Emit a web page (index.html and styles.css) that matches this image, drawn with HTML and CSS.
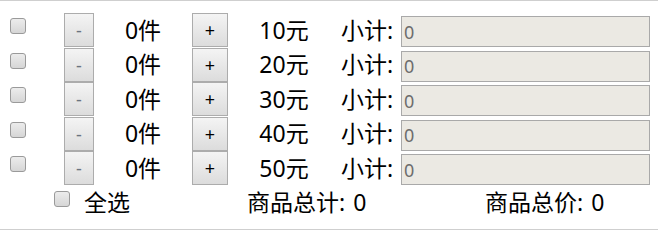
FILE: index.html
```html
<!DOCTYPE html>
<html lang="zh-CN">
<head>
    <meta charset="UTF-8">
    <title>购物车</title>
    <link rel="stylesheet" href="styles.css">
</head>
<body>
    <div class="cart">
        <div class="cart-list">
            <div class="cart-row">
                <input type="checkbox" class="check">
                <button class="btn" disabled>-</button>
                <span class="count">0件</span>
                <button class="btn">+</button>
                <span class="price">10元</span>
                <span class="label">小计:</span>
                <input type="text" class="subtotal" value="0" disabled>
            </div>
            <div class="cart-row">
                <input type="checkbox" class="check">
                <button class="btn" disabled>-</button>
                <span class="count">0件</span>
                <button class="btn">+</button>
                <span class="price">20元</span>
                <span class="label">小计:</span>
                <input type="text" class="subtotal" value="0" disabled>
            </div>
            <div class="cart-row">
                <input type="checkbox" class="check">
                <button class="btn" disabled>-</button>
                <span class="count">0件</span>
                <button class="btn">+</button>
                <span class="price">30元</span>
                <span class="label">小计:</span>
                <input type="text" class="subtotal" value="0" disabled>
            </div>
            <div class="cart-row">
                <input type="checkbox" class="check">
                <button class="btn" disabled>-</button>
                <span class="count">0件</span>
                <button class="btn">+</button>
                <span class="price">40元</span>
                <span class="label">小计:</span>
                <input type="text" class="subtotal" value="0" disabled>
            </div>
            <div class="cart-row">
                <input type="checkbox" class="check">
                <button class="btn" disabled>-</button>
                <span class="count">0件</span>
                <button class="btn">+</button>
                <span class="price">50元</span>
                <span class="label">小计:</span>
                <input type="text" class="subtotal" value="0" disabled>
            </div>
        </div>

        <div class="cart-footer">
            <label class="select-all">
                <input type="checkbox" class="check">
                <span>全选</span>
            </label>
            <span class="total-count">商品总计: 0</span>
            <span class="total-price">商品总价: 0</span>
        </div>
    </div>
</body>
</html>
```

FILE: styles.css
```css
* {
    margin: 0;
    padding: 0;
    box-sizing: border-box;
}

body {
    font-family: 'Noto Sans', 'Noto Sans CJK SC', sans-serif;
    font-size: 23px;
    color: #000;
    background-color: #fff;
}

/* 外框 */
.cart {
    height: 230px;
    border-top: 1px solid #cfcfcf;
    border-bottom: 1px solid #cfcfcf;
    padding-top: 12px;
}

/* 商品列表 */
.cart-list {
    display: grid;
    grid-auto-rows: 34.5px;
}

.cart-row {
    display: grid;
    grid-template-columns: 64px 30px 98px 36px 112px 61px 249px;
    align-items: center;
}

.check {
    appearance: none;
    -webkit-appearance: none;
    width: 16px;
    height: 16px;
    margin-left: 10px;
    margin-bottom: 8px; /* 复选框略高于文字中线 */
    border: 1px solid #9a9a9a;
    border-radius: 3px;
    background: linear-gradient(#ececec, #d6d6d6);
}

.btn {
    height: 34px;
    border: 1px solid #acacac;
    background: linear-gradient(#f4f4f4, #dcdcdc);
    font-family: 'Noto Sans', sans-serif;
    font-size: 18px;
    color: #000;
}

.btn:disabled {
    color: #6a7380;
}

.count,
.price {
    text-align: center;
    line-height: 1;
}

.label {
    padding-left: 1px;
    line-height: 1;
}

.subtotal {
    align-self: end;
    width: 249px;
    height: 31px;
    margin-bottom: 0.5px;
    padding-left: 2px;
    border: 1px solid #a9a9a9;
    background-color: #ebe9e3;
    font-family: 'Noto Sans', sans-serif;
    font-size: 18px;
    color: #6d6d6d;
}

/* 合计 */
.cart-footer {
    display: grid;
    grid-template-columns: 203px 238px auto;
    align-items: center;
    height: 34px;
    padding-left: 44px;
    word-spacing: 2px;
}

.select-all {
    display: flex;
    align-items: center;
    gap: 14px;
}

.cart-footer span {
    line-height: 1;
}
```
